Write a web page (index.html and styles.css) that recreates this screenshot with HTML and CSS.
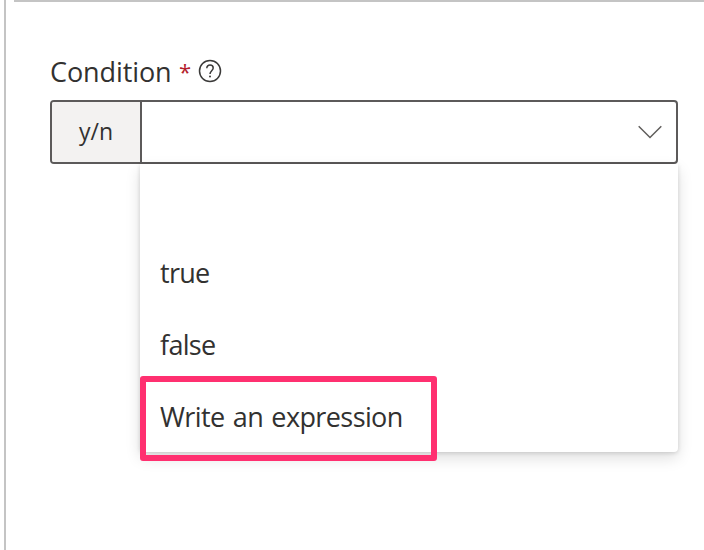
FILE: index.html
```
<!DOCTYPE html>
<html lang="en">
<head>
<meta charset="utf-8">
<title>Condition</title>
<link rel="stylesheet" href="styles.css">
</head>
<body>
<main class="panel">
  <div class="divider"></div>
  <section class="field">
    <div class="label"><span class="name">Condition</span><span class="required">*</span>
      <svg class="help" viewBox="0 0 24 24"><circle cx="12" cy="12" r="10.5"/><path d="M8.8 9.2C8.8 7.2 10.2 6.1 12 6.1s3.2 1.1 3.2 2.9c0 2.6-3.2 2.9-3.2 6"/><circle class="dot" cx="12" cy="17.4" r="1"/></svg>
    </div>
    <div class="combo">
      <div class="prefix"><span>y/n</span></div>
      <div class="input"><svg class="chevron" viewBox="0 0 24 14"><path d="M.7 1.2L12 12.5 23.3 1.2"/></svg></div>
    </div>
    <div class="menu">
      <div class="option"></div>
      <div class="option"><span class="short">true</span></div>
      <div class="option"><span class="short">false</span></div>
      <div class="option"><span class="long">Write an expression</span><div class="highlight"></div></div>
    </div>
  </section>
</main>
</body>
</html>
```
FILE: styles.css
```
* { box-sizing: border-box; }
body { margin: 0; background: #fff; color: #323130; font-family: "Open Sans", "Noto Sans", sans-serif; font-size: 27px; overflow: hidden; }
.panel { height: 550px; margin-left: 4px; border-left: 2px solid #c4c4c4; }
.divider { height: 2px; margin-left: 8px; background: #c4c4c4; }
.field { width: 628px; margin: 49px 0 0 44px; }
.label { display: flex; align-items: center; height: 40px; margin-bottom: 9px; }
.name { width: 121px; letter-spacing: -0.1px; }
.required { width: 11px; color: #b3202c; margin-left: 8px; font-size: 22px; }
.help { width: 24px; height: 24px; margin-left: 8px; fill: none; stroke: #3b3a39; stroke-width: 1.5; }
.help .dot { fill: #3b3a39; stroke: none; }
.combo { display: flex; height: 64px; border: 2px solid #5c5a5a; border-radius: 4px; overflow: hidden; }
.prefix { display: flex; align-items: center; justify-content: center; width: 90px; padding-bottom: 2px; background: #f3f2f1; border-right: 2px solid #5c5a5a; font-size: 23px; }
.input { flex: 1; display: flex; align-items: center; justify-content: flex-end; padding-right: 14px; }
.chevron { width: 24px; height: 14px; fill: none; stroke: #605e5c; stroke-width: 1.5; }
.menu { width: 538px; height: 288px; margin-left: 90px; border-radius: 0 0 4px 4px; box-shadow: 0 1px 4px rgba(0,0,0,.14), 0 6px 15px rgba(0,0,0,.13); }
.option { position: relative; display: flex; align-items: center; height: 72px; padding: 1px 0 0 20px; white-space: nowrap; }
.short { letter-spacing: -0.7px; }
.long { letter-spacing: -0.6px; word-spacing: 1.8px; }
.highlight { position: absolute; left: 0.4px; top: -4px; width: 297px; height: 85px; border: 6px solid #ff3070; border-radius: 3px; }
```
